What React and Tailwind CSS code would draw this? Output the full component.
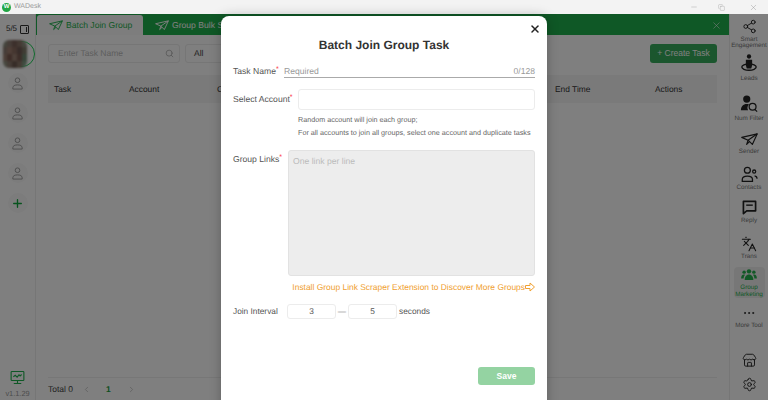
import React from 'react';
import { Search, X, Minus, ChevronLeft, ChevronRight, Plus, Ellipsis, Settings, Store, Share2, Languages, Copy } from 'lucide-react';

const mosaic = [
  '#8a8a7a', '#8c7a70', '#7a6058', '#8a7468', '#8f8f80',
  '#8b7a70', '#a07f70', '#8a6c60', '#6f5a54', '#7e7a68',
  '#9a7f72', '#7b5a50', '#9c8274', '#7a5c52', '#6f8a72',
  '#8f9080', '#8c7a6e', '#6e5a50', '#8a7668', '#7f9a82',
];

const PaperPlane = ({ className }) => (
  <svg viewBox="0 0 24 18" fill="none" stroke="currentColor" strokeWidth="1.6" strokeLinejoin="round" className={className}>
    <path d="M1 6 L23 1 L16 16 L10 10 Z" />
    <path d="M23 1 L10 10 L8 16 L12 12" />
  </svg>
);

const Bust = ({ className }) => (
  <svg viewBox="0 0 14 14" fill="none" stroke="currentColor" strokeWidth="1" className={className}>
    <circle cx="7" cy="3.500" r="2.500" />
    <path d="M2 13v-1.500C2 9.500 4 8.500 7 8.500s5 1 5 3V13z" />
  </svg>
);

const Leads = ({ className }) => (
  <svg viewBox="0 0 20 20" className={className}>
    <ellipse cx="10" cy="14.500" rx="8" ry="3.500" fill="none" stroke="currentColor" strokeWidth="1.500" />
    <circle cx="10" cy="2.800" r="2.400" fill="currentColor" />
    <path d="M6.500 6.500h7v6l-1 3.500h-5l-1-3.500z" fill="currentColor" />
  </svg>
);

const NumFilter = ({ className }) => (
  <svg viewBox="0 0 20 20" fill="currentColor" className={className}>
    <circle cx="7.500" cy="4.500" r="4" />
    <path d="M1 17c0-4 2.500-7 6.500-7 1 0 1.800.2 2.500.5A5.500 5.500 0 0 0 9 17z" />
    <circle cx="14" cy="13" r="3.800" fill="none" stroke="currentColor" strokeWidth="1.400" />
    <path d="M16.500 16l2.500 2.500" stroke="currentColor" strokeWidth="1.400" />
  </svg>
);

const Contacts = ({ className }) => (
  <svg viewBox="0 0 20 20" fill="none" stroke="currentColor" strokeWidth="1.500" className={className}>
    <circle cx="7.500" cy="5" r="3.500" />
    <path d="M1.500 18v-2c0-2.500 2-4 6-4s6 1.500 6 4v2z" />
    <circle cx="15.500" cy="6.500" r="1.800" />
    <path d="M16 11.500c1.500.3 2.800 1.300 2.800 3v.5" />
  </svg>
);

const ReplyBubble = ({ className }) => (
  <svg viewBox="0 0 16 16" fill="none" stroke="currentColor" className={className}>
    <path d="M1.500 1.500h13v10H5l-3.500 3z" strokeWidth="1.800" strokeLinejoin="round" />
    <path d="M4.500 5.500h7" strokeWidth="1.500" />
  </svg>
);

const Monitor = ({ className }) => (
  <svg viewBox="0 0 20 20" fill="none" stroke="currentColor" strokeWidth="1.500" className={className}>
    <rect x="1.500" y="2" width="17" height="12" rx="1" />
    <path d="M4.500 9l2.500-2 2.500 2.500 2.500-3 1.500 1.500 2-2" />
    <path d="M5 18h10M10 14v4" />
  </svg>
);

const GroupIcon = ({ className }) => (
  <svg viewBox="0 0 20 14" fill="currentColor" className={className}>
    <circle cx="10" cy="3" r="2.800" />
    <circle cx="3.800" cy="4" r="2.200" />
    <circle cx="16.200" cy="4" r="2.200" />
    <path d="M4.500 14c0-4 2-7 5.500-7s5.500 3 5.500 7z" />
    <path d="M0 12c0-3 1.200-5 3.500-5 .5 0 1 .1 1.400.3C3.800 8.600 3.200 10.200 3.100 12zM20 12c0-3-1.200-5-3.500-5-.5 0-1 .1-1.400.3 1.100 1.300 1.700 2.900 1.800 4.700z" />
  </svg>
);

const navItems = [
  { label: ['Smart', 'Engagement'], icon: <Share2 size={17} strokeWidth={1.5} />, h: 'h-[35px]', gap: 'mt-[3px]' },
  { label: ['Leads'], icon: <Leads className="w-[18px] h-[18px]" />, h: 'h-[41px]', gap: 'mt-[4px]' },
  { label: ['Num Filter'], icon: <NumFilter className="w-[18px] h-[18px]" />, h: 'h-[37px]', gap: 'mt-[3px]' },
  { label: ['Sender'], icon: <PaperPlane className="w-[17px] h-[15px]" />, h: 'h-[34px]', gap: 'mt-[2px]' },
  { label: ['Contacts'], icon: <Contacts className="w-[17px] h-[17px]" />, h: 'h-[34px]', gap: 'mt-[2px]' },
  { label: ['Reply'], icon: <ReplyBubble className="w-[15px] h-[15px]" />, h: 'h-[36px]', gap: 'mt-[3px]' },
  { label: ['Trans'], icon: <Languages size={16} strokeWidth={1.6} />, h: 'h-[36px]', gap: 'mt-[2px]' },
];

const columns = [
  { name: 'Task', cls: 'w-[75px]' },
  { name: 'Account', cls: 'w-[88px]' },
  { name: 'Created', cls: 'w-[338px]' },
  { name: 'End Time', cls: 'w-[100px]' },
  { name: 'Actions', cls: '' },
];

const App = () => {
  return (
    <div className="relative w-[768px] h-[400px] overflow-hidden bg-white flex flex-col font-['Liberation_Sans',Arial,sans-serif] [text-rendering:geometricPrecision]">
      {/* title bar */}
      <div className="h-[14px] shrink-0 flex items-center bg-[#f3f3f3] pl-[2px]">
        <div className="w-[9px] h-[9px] rounded-full bg-[#22a645] flex items-center justify-center text-[6px] font-bold text-white">W</div>
        <span className="ml-[3px] text-[7px] text-[#999]">WADesk</span>
        <div className="ml-auto flex items-center text-[#888]">
          <Minus size={8} strokeWidth={1} className="mr-[20px]" />
          <Copy size={7} strokeWidth={1} className="mr-[24px]" />
          <X size={9} strokeWidth={1} className="mr-[10px]" />
        </div>
      </div>

      <div className="flex flex-1 min-h-0 bg-white">
        {/* accounts column */}
        <div className="w-[36px] shrink-0 border-r border-[#ececec] flex flex-col items-center">
          <div className="mt-[9px] h-[12px] flex items-center text-[8px] text-[#333]">
            5/5
            <span className="ml-[3px] w-[9px] h-[9px] border border-[#333] rounded-[1px] flex items-center justify-end pr-[1px]">
              <span className="w-[1px] h-[5px] bg-[#333]" />
            </span>
          </div>
          <div className="relative mt-[5px] ml-[-4px] w-[26px] h-[28px]">
            <div className="absolute left-[6px] top-[1px] w-[26px] h-[26px] rounded-full border-[1.500px] border-[#1fd45a]" />
            <div className="relative grid grid-cols-5 w-[24px] h-[28px] overflow-hidden rounded-[6px] blur-[1px]">
              {mosaic.map((c, i) => (
                <div key={i} style={{ backgroundColor: c }} />
              ))}
            </div>
          </div>
          {[0, 1, 2, 3].map((i) => (
            <div key={i} className={`w-[20px] h-[20px] rounded-full bg-[#f8f8f8] flex items-center justify-center text-[#999] ${i === 0 ? 'mt-[5px]' : 'mt-[10px]'}`}>
              <Bust className="w-[13px] h-[13px]" />
            </div>
          ))}
          <div className="mt-[10px] w-[20px] h-[20px] rounded-full bg-[#f8f8f8] flex items-center justify-center text-[#0fa83c]">
            <Plus size={13} strokeWidth={2.500} />
          </div>
          <div className="mt-auto text-[#1fb14d]">
            <Monitor className="w-[15px] h-[15px]" />
          </div>
          <div className="mt-[3px] mb-[1px] text-[7.400px] text-[#999]">v1.1.29</div>
        </div>

        {/* main */}
        <div className="flex-1 min-w-0 flex flex-col bg-white">
          <div className="h-[21px] shrink-0 bg-[#1fb14d] flex items-end pl-[1px]">
            <div className="w-[106px] h-[20px] bg-[#fafafa] rounded-t-[3px] flex items-center pl-[12px] text-[#1fb14d] text-[8.600px] whitespace-nowrap">
              <PaperPlane className="w-[14px] h-[11px] mr-[3px]" />
              Batch Join Group
            </div>
            <div className="ml-[12px] h-[20px] flex items-center text-white text-[8.600px] whitespace-nowrap">
              <PaperPlane className="w-[14px] h-[11px] mr-[3px]" />
              Group Bulk Send
            </div>
            <X size={11} strokeWidth={1.200} className="ml-auto mr-[7px] mb-[4px] text-white" />
          </div>

          <div className="mt-[9px] mx-[12px] flex items-center h-[19px]">
            <div className="w-[132px] h-full border border-[#ececec] rounded-[3px] flex items-center pl-[9px] pr-[5px] text-[8.500px] text-[#bbb]">
              Enter Task Name
              <Search size={9} className="ml-auto text-[#aaa]" />
            </div>
            <div className="ml-[5px] w-[50px] h-full border border-[#ececec] rounded-[3px] flex items-center pl-[8px] text-[8.500px] text-[#444]">All</div>
            <button className="ml-auto w-[67px] h-full rounded-[3px] bg-[#36ad5c] text-white text-[8.500px]">+ Create Task</button>
          </div>

          <div className="mt-[12px] mx-[12px] h-[28px] bg-[#f5f5f5] flex items-center pl-[6px] text-[8.400px] text-[#333]">
            {columns.map((c) => (
              <div key={c.name} className={c.cls}>{c.name}</div>
            ))}
          </div>

          <div className="mt-auto mx-[12px] h-[23px] border-t border-[#eee] flex items-center text-[8.500px] text-[#444]">
            Total 0
            <ChevronLeft size={9} className="ml-[9px] text-[#bbb]" />
            <span className="ml-[15px] font-bold text-[#1a9c42]">1</span>
            <ChevronRight size={9} className="ml-[16px] text-[#bbb]" />
          </div>
        </div>

        {/* right tool column */}
        <div className="w-[39px] shrink-0 border-l border-[#ececec] flex flex-col items-center text-[#222]">
          {navItems.map((n) => (
            <div key={n.label[0]} className={`w-full flex flex-col items-center justify-start pt-[5px] ${n.h}`}>
              {n.icon}
              {n.label.map((l, i) => (
                <span key={l} className={`text-[6.300px] leading-[6px] text-[#777] whitespace-nowrap ${i === 0 ? n.gap : ''}`}>{l}</span>
              ))}
            </div>
          ))}
          <div className="w-[31px] h-[31px] shrink-0 rounded-[4px] bg-[#efefef] flex flex-col items-center pt-[2px] text-[#22b14c]">
            <GroupIcon className="w-[16px] h-[11px]" />
            <span className="mt-[5px] text-[6.300px] leading-[6px] text-[#22b14c]">Group</span>
            <span className="text-[6.300px] leading-[7px] text-[#22b14c] whitespace-nowrap">Marketing</span>
          </div>
          <div className="mt-[8px] flex flex-col items-center">
            <Ellipsis size={14} strokeWidth={1.500} />
            <span className="text-[6.300px] leading-[7px] mt-[2px] text-[#777] whitespace-nowrap">More Tool</span>
          </div>
          <Store size={15} strokeWidth={1.500} className="mt-auto" />
          <Settings size={15} strokeWidth={1.500} className="mt-[9px] mb-[8px]" />
        </div>
      </div>

      {/* modal backdrop */}
      <div className="absolute left-0 right-0 top-[14px] bottom-0 bg-black/50 flex justify-center">
        <div className="relative mt-[2px] w-[326px] h-[400px] shrink-0 bg-white rounded-[8px] px-[12px] text-[#555] shadow-[0_0_12px_rgba(0,0,0,0.25)]">
          <X size={12} strokeWidth={3} className="absolute right-[6px] top-[7px] text-[#222]" />
          <div className="pt-[20px] h-[48px] text-center text-[12px] font-bold text-[#333]">Batch Join Group Task</div>

          <div className="h-[13px] mt-[1px] flex items-end text-[8.600px]">
            <div className="w-[51px] whitespace-nowrap">Task Name<span className="text-red-500 text-[7px] align-top">*</span></div>
            <div className="flex-1 border-b border-[#aaa] flex justify-between text-[#999] leading-[10px] h-[12px]">
              <span>Required</span>
              <span>0/128</span>
            </div>
          </div>

          <div className="mt-[11px] flex text-[8.600px]">
            <div className="w-[65px] pt-[4px] whitespace-nowrap">Select Account<span className="text-red-500 text-[7px] align-top">*</span></div>
            <div className="flex-1 h-[21px] border border-[#ececec] rounded-[3px]" />
          </div>
          <div className="ml-[65px] mt-[3px] text-[7.200px] leading-[13px] text-[#666] whitespace-nowrap">
            <div>Random account will join each group;</div>
            <div>For all accounts to join all groups, select one account and duplicate tasks</div>
          </div>

          <div className="mt-[11px] flex text-[8.600px]">
            <div className="w-[55px] pt-[3px]">Group Links<span className="text-red-500 text-[7px] align-top">*</span></div>
            <div className="flex-1 h-[126px] bg-[#ededed] border border-[#e2e2e2] rounded-[3px] px-[4px] py-[4px] text-[#bbb]">One link per line</div>
          </div>
          <div className="mt-[5px] h-[12px] flex items-center justify-end text-[8.430px] text-[#f0a030] whitespace-nowrap">
            Install Group Link Scraper Extension to Discover More Groups
            <svg viewBox="0 0 10 10" fill="none" stroke="currentColor" strokeWidth="1" className="w-[10px] h-[10px]">
              <path d="M.5 3.500H5V1l4.500 4L5 9V6.500H.5z" />
            </svg>
          </div>

          <div className="mt-[11px] flex items-center text-[8.300px]">
            <div className="w-[54px]">Join Interval</div>
            <div className="w-[49px] h-[15px] border border-[#ececec] rounded-[3px] flex items-center justify-center">3</div>
            <div className="w-[12px] text-center text-[#777]">—</div>
            <div className="w-[49px] h-[15px] border border-[#ececec] rounded-[3px] flex items-center justify-center">5</div>
            <div className="ml-[2px]">seconds</div>
          </div>

          <div className="mt-[48px] flex justify-end">
            <button className="w-[57px] h-[18px] rounded-[3px] bg-[#94d3a2] text-white text-[8.500px] font-bold">Save</button>
          </div>
        </div>
      </div>
    </div>
  );
};

export default App;
